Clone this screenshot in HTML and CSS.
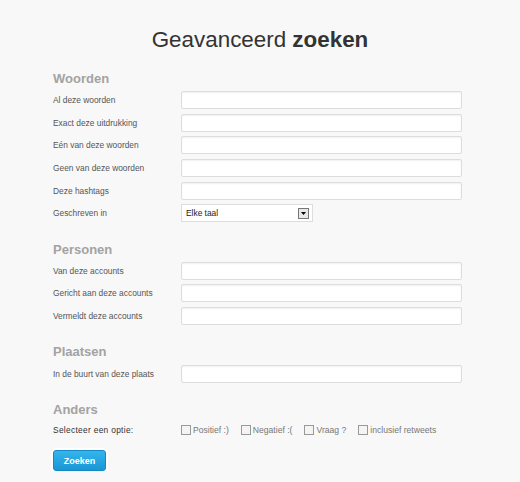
FILE: index.html
```html
<!DOCTYPE html>
<html lang="nl">

<head>
    <meta charset="UTF-8">
    <meta name="viewport" content="width=device-width, initial-scale=1.0">
    <title>Geavanceerd zoeken</title>
    <link rel="stylesheet" href="styles.css">
</head>

<body>
    <div class="page">
        <h1 class="title">Geavanceerd <b>zoeken</b></h1>

        <form class="search">
            <div class="section">
                <h2>Woorden</h2>
                <div class="row"><label>Al deze woorden</label><input type="text"></div>
                <div class="row"><label>Exact deze uitdrukking</label><input type="text"></div>
                <div class="row"><label>Eén van deze woorden</label><input type="text"></div>
                <div class="row"><label>Geen van deze woorden</label><input type="text"></div>
                <div class="row"><label>Deze hashtags</label><input type="text"></div>
                <div class="row">
                    <label>Geschreven in</label>
                    <div class="select">
                        <span>Elke taal</span>
                        <span class="arrow">
                            <svg width="9" height="9" viewBox="0 0 9 9"><path d="M2 3h5L4.5 6z" fill="#000"/></svg>
                        </span>
                    </div>
                </div>
            </div>

            <div class="section">
                <h2>Personen</h2>
                <div class="row"><label>Van deze accounts</label><input type="text"></div>
                <div class="row"><label>Gericht aan deze accounts</label><input type="text"></div>
                <div class="row"><label>Vermeldt deze accounts</label><input type="text"></div>
            </div>

            <div class="section">
                <h2>Plaatsen</h2>
                <div class="row"><label>In de buurt van deze plaats</label><input type="text"></div>
            </div>

            <div class="section last">
                <h2>Anders</h2>
                <div class="row options-row">
                    <label class="dark">Selecteer een optie:</label>
                    <div class="options">
                        <span class="opt"><i class="box"></i>Positief :)</span>
                        <span class="opt"><i class="box"></i>Negatief :(</span>
                        <span class="opt"><i class="box"></i>Vraag ?</span>
                        <span class="opt"><i class="box"></i>inclusief retweets</span>
                    </div>
                </div>
            </div>

            <button type="button" class="btn">Zoeken</button>
        </form>
    </div>
</body>

</html>
```

FILE: styles.css
```css
body {
    margin: 0;
    background-color: #f8f8f8;
    font-family: "Liberation Sans", Arial, sans-serif;
    color: #333;
}

.page {
    padding: 24px 0 0 53px;
    width: 410px;
}

.title {
    margin: 0 0 0 -53px;
    width: 520px;
    text-align: center;
    font-size: 22.4px;
    font-weight: normal;
    color: #333;
    line-height: 32px;
}

.title b {
    font-weight: bold;
}

.search {
    margin-top: 13px;
}

.section {
    margin-bottom: 15px;
}

.section.last {
    margin-bottom: 10px;
}

.section h2 {
    margin: 0;
    font-size: 13px;
    line-height: 20px;
    font-weight: bold;
    color: #a3a3a3;
}

.row {
    display: flex;
    align-items: center;
    height: 22.6px;
}

.row label {
    width: 128px;
    flex: none;
    font-size: 8.4px;
    color: #555;
}

.row label.dark {
    color: #333;
    letter-spacing: 0.3px;
}

.row input {
    width: 281px;
    height: 18px;
    box-sizing: border-box;
    margin: 0;
    padding: 0 4px;
    background: #fff;
    border: 1px solid #ddd;
    border-radius: 2px;
    box-shadow: inset 0 1px 2px rgba(0, 0, 0, 0.06);
}

.select {
    width: 132px;
    height: 18px;
    box-sizing: border-box;
    display: flex;
    align-items: center;
    justify-content: space-between;
    background: #fff;
    border: 1px solid #ddd;
    padding: 0 3px 0 4px;
    font-size: 8.4px;
    color: #222;
}

.arrow {
    width: 11px;
    height: 11px;
    box-sizing: border-box;
    border: 1px solid #777;
    background: #e8e8e8;
    display: flex;
    align-items: center;
    justify-content: center;
}

.options-row {
    height: 20px;
}

.options {
    display: flex;
    gap: 12px;
    font-size: 8.6px;
    color: #777;
}

.opt {
    display: flex;
    align-items: center;
}

.box {
    width: 8px;
    height: 8px;
    border: 1px solid #999;
    background: #f4f4f4;
    margin-right: 2px;
}

.btn {
    width: 53px;
    height: 21px;
    padding: 0;
    font-family: "Liberation Sans", Arial, sans-serif;
    font-size: 9px;
    font-weight: bold;
    color: #fff;
    background: linear-gradient(#33b5ec, #1a97d5);
    border: 1px solid #1787c2;
    border-radius: 3px;
    box-shadow: 0 0 0 2px #fff;
}
```
